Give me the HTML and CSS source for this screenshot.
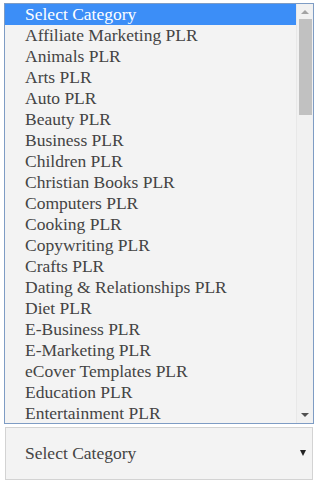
FILE: index.html
```html
<!DOCTYPE html>
<html lang="en">

<head>
  <meta charset="UTF-8">
  <meta name="viewport" content="width=device-width, initial-scale=1.0">
  <title>Select Category</title>
  <link rel="stylesheet" href="styles.css">
</head>

<body>

  <div class="listbox">
    <ul class="options">
      <li class="selected">Select Category</li>
      <li>Affiliate Marketing PLR</li>
      <li>Animals PLR</li>
      <li>Arts PLR</li>
      <li>Auto PLR</li>
      <li>Beauty PLR</li>
      <li>Business PLR</li>
      <li>Children PLR</li>
      <li>Christian Books PLR</li>
      <li>Computers PLR</li>
      <li>Cooking PLR</li>
      <li>Copywriting PLR</li>
      <li>Crafts PLR</li>
      <li>Dating &amp; Relationships PLR</li>
      <li>Diet PLR</li>
      <li>E-Business PLR</li>
      <li>E-Marketing PLR</li>
      <li>eCover Templates PLR</li>
      <li>Education PLR</li>
      <li>Entertainment PLR</li>
    </ul>
    <div class="scrollbar">
      <span class="arrow up"></span>
      <div class="thumb"></div>
      <span class="arrow down"></span>
    </div>
  </div>

  <div class="dropdown">
    <span>Select Category</span>
    <span class="caret"></span>
  </div>

</body>

</html>
```

FILE: styles.css
```css
* {
  padding: 0;
  margin: 0;
  box-sizing: border-box;
}

body {
  width: 318px;
  height: 486px;
  background: #fff;
  padding: 3px 4px 0 4px;
  font-family: 'Liberation Serif', serif;
  font-size: 17.5px;
  color: #444;
}

.listbox {
  display: flex;
  height: 421px;
  border: 1px solid #7e9cc4;
  background: #f3f3f3;
  overflow: hidden;
}

.options {
  flex: 1;
  list-style: none;
}

.options li {
  height: 21px;
  line-height: 21px;
  padding-left: 20px;
  white-space: nowrap;
}

.options li.selected {
  background: #3c8ef7;
  color: #fff;
}

.scrollbar {
  width: 17px;
  display: flex;
  flex-direction: column;
  align-items: center;
  background: #f1f1f1;
  border-left: 1px solid #e8e8e8;
}

.thumb {
  width: 13px;
  height: 96px;
  background: #c1c1c1;
  margin-bottom: auto;
}

.arrow {
  width: 0;
  height: 0;
  border-left: 4px solid transparent;
  border-right: 4px solid transparent;
  margin: 6px 0;
}

.arrow.up {
  border-bottom: 4px solid #a3a3a3;
  margin-bottom: 5px;
}

.arrow.down {
  border-top: 4px solid #505050;
  margin-bottom: 6px;
}

.dropdown {
  display: flex;
  align-items: center;
  justify-content: space-between;
  height: 53px;
  margin: 3px 1px 0 1px;
  padding: 0 6px 0 19px;
  background: #f3f3f3;
  border: 1px solid #d3d3d3;
}

.caret {
  width: 0;
  height: 0;
  border-left: 3.5px solid transparent;
  border-right: 3.5px solid transparent;
  border-top: 6px solid #222;
  margin-top: -2px;
}
```
